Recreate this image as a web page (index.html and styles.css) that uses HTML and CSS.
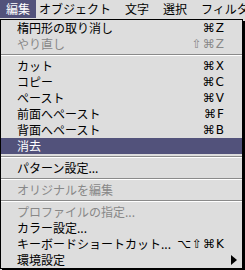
FILE: index.html
```html
<!DOCTYPE html>
<html lang="ja">

<head>
    <meta charset="UTF-8">
    <title>編集メニュー</title>
    <link rel="stylesheet" href="styles.css">
</head>

<body>
    <div class="menubar">
        <span class="title active">編集</span>
        <span class="title">オブジェクト</span>
        <span class="title">文字</span>
        <span class="title">選択</span>
        <span class="title">フィルタ</span>
    </div>
    <div class="menu">
        <div class="item"><span>楕円形の取り消し</span><span class="key">⌘Z</span></div>
        <div class="item disabled"><span>やり直し</span><span class="key">⇧⌘Z</span></div>
        <div class="sep"></div>
        <div class="item"><span>カット</span><span class="key">⌘X</span></div>
        <div class="item"><span>コピー</span><span class="key">⌘C</span></div>
        <div class="item"><span>ペースト</span><span class="key">⌘V</span></div>
        <div class="item"><span>前面へペースト</span><span class="key">⌘F</span></div>
        <div class="item"><span>背面へペースト</span><span class="key">⌘B</span></div>
        <div class="item selected"><span>消去</span></div>
        <div class="sep"></div>
        <div class="item"><span>パターン設定...</span></div>
        <div class="sep"></div>
        <div class="item disabled"><span>オリジナルを編集</span></div>
        <div class="sep"></div>
        <div class="item disabled"><span>プロファイルの指定...</span></div>
        <div class="item"><span>カラー設定...</span></div>
        <div class="item"><span>キーボードショートカット...</span><span class="key">⌥⇧⌘K</span></div>
        <div class="item submenu"><span>環境設定</span><span class="arrow"></span></div>
    </div>
</body>

</html>
```

FILE: styles.css
```css
body {
    margin: 0;
    width: 245px;
    height: 270px;
    overflow: hidden;
    background: #dddddd;
    font-family: "Noto Sans CJK JP", "DejaVu Sans", sans-serif;
    font-size: 12px;
    color: #000;
}

.menubar {
    height: 19px;
    display: flex;
    align-items: flex-start;
    white-space: nowrap;
    gap: 14px;
}

.title {
    height: 18px;
    line-height: 18px;
}

.title.active {
    background: #52527b;
    color: #fff;
    padding: 0 6px;
}

.title:nth-child(2) {
    margin-left: -11px;
}

.menu {
    width: 241px;
    border: 1px solid #000;
    background: #dddddd;
    box-shadow: 2px 2px 0 #000;
}

.item {
    height: 16px;
    display: flex;
    align-items: center;
    justify-content: space-between;
    padding: 0 17px 0 16px;
    white-space: nowrap;
}

.item span {
    line-height: 16px;
}

.key {
    font-family: "DejaVu Sans", sans-serif;
    font-size: 12px;
    letter-spacing: 1px;
}

.disabled {
    color: #888888;
}

.selected {
    background: #52527b;
    color: #fff;
}

.submenu {
    padding-right: 5px;
}

.arrow {
    width: 0;
    height: 0;
    border-top: 5px solid transparent;
    border-bottom: 5px solid transparent;
    border-left: 6px solid #000;
}

.sep {
    height: 6px;
    display: flex;
    align-items: center;
}

.sep::before {
    content: "";
    display: block;
    width: 100%;
    height: 0;
    border-top: 1px solid #8a8a8a;
    border-bottom: 1px solid #ffffff;
}
```
